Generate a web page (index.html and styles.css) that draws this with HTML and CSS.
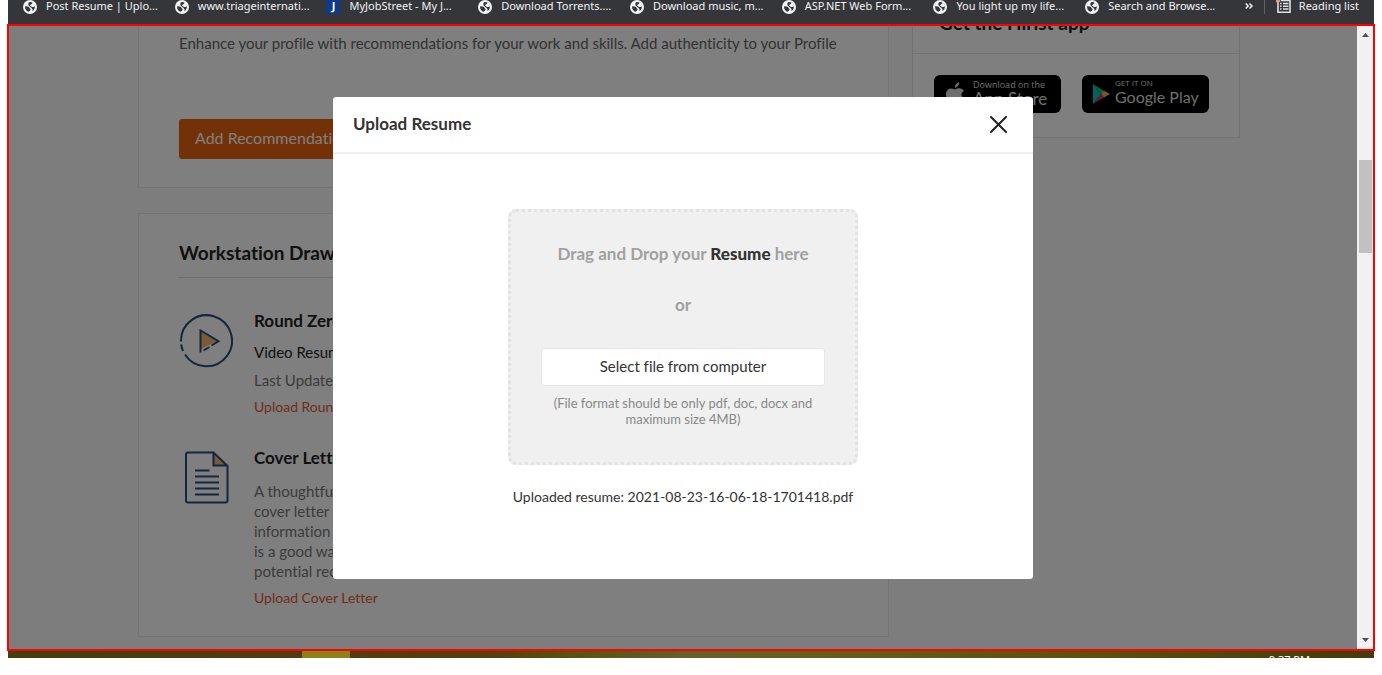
FILE: index.html
```html
<!DOCTYPE html>
<html lang="en">
<head>
<meta charset="utf-8">
<title>Post Resume | Upload</title>
<link rel="stylesheet" href="styles.css">
</head>
<body>
<svg class="defs" width="0" height="0" aria-hidden="true">
  <symbol id="globe" viewBox="0 0 14 14">
    <circle cx="7" cy="7" r="7" fill="#f1f3f4"/>
    <path d="M2 6.2 L4.8 6.4 Q6.6 6.4 6.3 8 Q7.6 8.2 7.6 9.4 Q7 11.4 5.4 11.8 Q2 10.6 2 6.2Z M6 2.3 Q7.6 1.6 9.6 2.4 Q9.2 4 7.8 4.4 Q6.6 4.6 7.4 5.8 Q8.6 7.2 10 7 Q11.4 7.2 11.9 6 Q12 9.6 9.4 11 Q10 9 8.6 8 Q6.8 6.8 5.4 5 Q5 3.4 6 2.3Z" fill="#35363a"/>
  </symbol>
</svg>
<nav class="bookmarks" aria-label="Bookmarks">
  <div class="bookmark-list">
    <a class="bookmark" href="#"><svg class="favicon"><use href="#globe"/></svg>Post Resume | Uplo...</a>
    <a class="bookmark" href="#"><svg class="favicon"><use href="#globe"/></svg>www.triageinternati...</a>
    <a class="bookmark" href="#"><span class="favicon favicon-j">J</span>MyJobStreet - My J...</a>
    <a class="bookmark" href="#"><svg class="favicon"><use href="#globe"/></svg>Download Torrents....</a>
    <a class="bookmark" href="#"><svg class="favicon"><use href="#globe"/></svg>Download music, m...</a>
    <a class="bookmark" href="#"><svg class="favicon"><use href="#globe"/></svg>ASP.NET Web Form...</a>
    <a class="bookmark" href="#"><svg class="favicon"><use href="#globe"/></svg>You light up my life...</a>
    <a class="bookmark" href="#"><svg class="favicon"><use href="#globe"/></svg>Search and Browse...</a>
  </div>
  <button class="more" type="button" aria-label="More bookmarks"><svg width="8" height="12" viewBox="0 0 8 12" fill="none" stroke="#f1f3f4" stroke-width="1.5"><path d="M.7 3.5 3.2 6 .7 8.5M4.5 3.5 7 6 4.5 8.5"/></svg></button>
  <a class="reading" href="#"><svg width="15" height="13" viewBox="0 0 15 13"><path d="M2 0V12.2H14V.5H5" fill="none" stroke="#dfe1e3" stroke-width="1.6"/><path d="M4 3.5h1.6M7 3.5h5.5M4 6.2h1.6M7 6.2h5.5M4 9h1.6M7 9h5.5" stroke="#dfe1e3" stroke-width="1.4"/><circle cx="1.8" cy="0" r="2.6" fill="#f28b82"/></svg>Reading list</a>
</nav>

<div class="frame">
  <div class="page">
    <main class="content">
      <section class="card recommend">
        <p>Enhance your profile with recommendations for your work and skills. Add authenticity to your Profile</p>
        <button class="primary" type="button">Add Recommendation</button>
      </section>
      <section class="card drawer">
        <h2>Workstation Drawer</h2>
        <article class="item">
          <svg class="item-icon" width="54" height="54" viewBox="0 0 54 54" fill="none" stroke="#2b4c7e" stroke-width="2">
            <path d="M2 27.500A25.500 25.500 0 1 1 6 40.500M2.200 30.500Q2.700 34 4 37"/>
            <path d="M22 18 38 27 22 35Z" fill="#f5b66c" stroke="none"/>
            <path d="M24.500 36.500 30.500 33M32.500 31.500 39.500 27.200 21.500 16.500V38.500"/>
          </svg>
          <div class="item-text">
            <h3>Round Zero</h3>
            <p class="kind">Video Resume</p>
            <p class="updated">Last Updated</p>
            <a href="#">Upload Round Zero</a>
          </div>
        </article>
        <article class="item">
          <svg class="item-icon" width="54" height="54" viewBox="0 0 54 54" fill="none" stroke="#2b4c7e" stroke-width="2">
            <path d="M35 3V14H46Z" fill="#f5b66c" stroke="none"/>
            <path d="M34.500 1.500H9Q7 1.500 7 3.500V49.500Q7 51.500 9 51.500H46.500Q48.500 51.500 48.500 49.500V15ZM34.500 1.500V14.500H48"/>
            <path d="M16 19.500h14.500M16 25.500h24M16 31.500h24M16 37.500h24M16 43.500h24"/>
          </svg>
          <div class="item-text">
            <h3>Cover Letter</h3>
            <p class="about">A thoughtful<br>cover letter<br>information<br>is a good way<br>potential rec</p>
            <a href="#">Upload Cover Letter</a>
          </div>
        </article>
      </section>
    </main>
    <aside class="card app">
      <h2>Get the Hirist app</h2>
      <div class="badges">
        <a class="badge apple" href="#">
          <svg width="20" height="24" viewBox="0 0 20 24" fill="#ddd"><path d="M14 0Q14.500 4 10 6 9.500 2 14 0ZM10 7.500Q12 6 14.500 6.200 17.500 6.500 19 8.800 13.500 12.500 19.500 17 17 23 14 23 12 22 10 22.500 7.500 24 5 22 .5 17 1 11 3 4.500 10 7.500Z"/></svg>
          <span><small>Download on the</small><b>App Store</b></span>
        </a>
        <a class="badge google" href="#">
          <svg width="18" height="20" viewBox="0 0 18 20"><path d="M1 0V20L9 10Z" fill="#00c8b8"/><path d="M1 0 12 7 9 10Z" fill="#20c070"/><path d="M1 20 12 13.500 9 10Z" fill="#d02c72"/><path d="M12 6.500 18 10 12 13.500 9 10Z" fill="#e8b040"/></svg>
          <span><small>GET IT ON</small><b>Google Play</b></span>
        </a>
      </div>
    </aside>

    <div class="overlay">
      <div class="modal" role="dialog" aria-labelledby="modal-title">
        <header class="modal-head">
          <h1 id="modal-title">Upload Resume</h1>
          <button class="close" type="button" aria-label="Close"><svg width="17" height="17" viewBox="0 0 17 17" stroke="#222" stroke-width="2" stroke-linecap="round"><path d="M1 1 16 16M16 1 1 16"/></svg></button>
        </header>
        <div class="modal-body">
          <div class="dropzone">
            <p class="drag">Drag and Drop your <strong>Resume</strong> here</p>
            <p class="drag">or</p>
            <button class="select" type="button">Select file from computer</button>
            <p class="hint">(File format should be only pdf, doc, docx and maximum size 4MB)</p>
          </div>
          <p class="uploaded">Uploaded resume: 2021-08-23-16-06-18-1701418.pdf</p>
        </div>
      </div>
    </div>
  </div>
  <div class="scrollbar" aria-hidden="true">
    <svg width="7" height="4" viewBox="0 0 7 4" fill="#505050"><path d="M0 4 3.500 0 7 4Z"/></svg>
    <div class="track"><div class="thumb"></div></div>
    <svg width="7" height="4" viewBox="0 0 7 4" fill="#505050"><path d="M0 0 3.500 4 7 0Z"/></svg>
  </div>
</div>
<footer class="taskbar"><span class="task"></span><time>9:37 PM</time></footer>
</body>
</html>
```
FILE: styles.css
```css
* { box-sizing: border-box; }
body {
  margin: 0;
  padding: 0 7px 17px;
  height: 100vh;
  display: flex;
  flex-direction: column;
  background: #fff;
  color: #222;
  font: 15px/20px Lato, "Open Sans", sans-serif;
  font-variant-ligatures: none;
}
h1, h2, h3, p { margin: 0; }
button { font: inherit; font-variant-ligatures: none; cursor: pointer; }
a { text-decoration: none; }
.defs { position: absolute; }

.bookmarks {
  display: flex;
  flex: 0 0 24px;
  margin: 0 1px;
  padding: 0 14px 0 15px;
  background: #35363a;
  font: 11px/12px "Noto Sans", "Open Sans", sans-serif;
  overflow: hidden;
}
.bookmark-list { display: flex; flex: 1; }
.bookmark { display: flex; flex: 1 1 0; gap: 9px; color: #f1f3f4; white-space: nowrap; }
.favicon { flex: none; width: 14px; height: 14px; }
.favicon-j { background: #0f3a87; color: #fff; font-weight: 700; text-align: center; }
.more { height: 12px; padding: 0; margin: 0 11px 0 8px; border: 0; background: none; display: flex; }
.reading {
  display: flex;
  gap: 8px;
  height: 14px;
  padding: 0 1px 0 11px;
  border-left: 1px solid #5f6164;
  color: #f1f3f4;
  white-space: nowrap;
}

.frame { display: flex; flex: 1; min-height: 0; border: 2px solid #f00; }
.page {
  position: relative;
  display: flex;
  align-items: flex-start;
  gap: 23px;
  flex: 1;
  min-width: 0;
  padding: 0 117px 0 129px;
  background: #fafafa;
  overflow: hidden;
}
.content { flex: 1; min-width: 0; display: flex; flex-direction: column; gap: 25px; }
.card { background: #fff; border: 1px solid #e8e8e8; }

.recommend { border-top: 0; padding: 7px 40px 28px; color: #666; }
.primary {
  display: block;
  height: 40px;
  margin-top: 66px;
  padding: 0 16px 2px;
  border: 0;
  border-radius: 3px;
  background: #e76210;
  color: #fff;
  font-size: 16px;
}

.drawer { padding: 29px 40px 28px; }
.drawer h2 { padding-bottom: 14px; border-bottom: 1px solid #ddd; font-size: 19px; line-height: 20px; }
.item { display: flex; gap: 21px; margin-top: 33px; }
.item + .item { margin-top: 31px; }
.item-icon { flex: none; margin-top: 3px; }
.item h3 { font-size: 17px; line-height: 20px; }
.item a { display: block; margin-top: 7px; color: #e2592d; font-size: 14px; }
.kind { margin-top: 11px; }
.updated { margin-top: 8px; color: #777; }
.about { margin-top: 13px; color: #777; }

.app { width: 328px; flex: none; margin-top: -14px; border-color: #dfe8e6; }
.app h2 { padding: 0 26px 20px; border-bottom: 1px solid #dfe8e6; font-size: 19px; line-height: 20px; }
.badges { display: flex; gap: 21px; padding: 21px 21px 24px; }
.badge {
  display: flex;
  align-items: center;
  gap: 8px;
  width: 127px;
  height: 38px;
  padding: 0 11px;
  border-radius: 6px;
  background: #000;
  color: #ddd;
  white-space: nowrap;
}
.badge svg { flex: none; }
.badge small, .badge b { display: block; }
.badge small { font: 9px/10px "Open Sans", sans-serif; }
.badge b { font-size: 17px; line-height: 18px; font-weight: 400; }
.google { gap: 5px; padding: 0 10px; }
.google span { padding-bottom: 4px; }
.google small { font-size: 8px; }
.google b { font-size: 16px; }

.overlay {
  position: absolute;
  inset: 0;
  display: flex;
  align-items: flex-start;
  justify-content: center;
  padding-top: 71px;
  background: rgba(0, 0, 0, .5);
}
.modal { width: 700px; max-width: 100%; background: #fff; border-radius: 3px; }
.modal-head {
  display: flex;
  align-items: center;
  justify-content: space-between;
  padding: 17px 26px 18px 20px;
  border-bottom: 2px solid #f0f0f0;
}
.modal-head h1 { color: #333; font-size: 17px; line-height: 20px; }
.close { display: flex; padding: 0; border: 0; background: none; }
.modal-body { display: flex; flex-direction: column; align-items: center; padding: 55px 20px 72px; }
.dropzone {
  display: flex;
  flex-direction: column;
  align-items: center;
  width: 350px;
  padding: 32px 30px 35px;
  border: 3px dotted #e2e2e2;
  border-radius: 8px;
  background: #f0f0f0;
  text-align: center;
}
.drag { margin-bottom: 31px; color: #a0a0a0; font-size: 17px; font-weight: 700; }
.drag strong { color: #333; }
.select { width: 100%; height: 38px; margin-top: 2px; padding-bottom: 3px; border: 1px solid #e6e6e6; border-radius: 3px; background: #fff; color: #333; font-size: 15px; }
.hint { margin-top: 9px; color: #888; font-size: 13px; line-height: 16px; }
.uploaded { margin-top: 22px; color: #333; font-size: 14px; }

.scrollbar { display: flex; flex-direction: column; align-items: center; width: 16px; padding: 7px 0; background: #f1f1f1; }
.track { flex: 1; width: 100%; padding: 123px 1px 0 2px; }
.thumb { height: 93px; background: #c1c1c1; }

.taskbar {
  display: flex;
  flex: 0 0 7px;
  margin: 0 1px;
  padding: 0 64px 0 294px;
  justify-content: space-between;
  background: linear-gradient(90deg, #433f10, #553c0d 25%, #57400a 36%, #57500d 40%, #66602a 50%, #66601a 58%, #5c500c 80%, #453a0a);
  overflow: hidden;
}
.task { width: 48px; background: #8f801a; }
.taskbar time { padding-top: 2px; color: #fff; font: 11px/14px "Noto Sans", sans-serif; }
```
